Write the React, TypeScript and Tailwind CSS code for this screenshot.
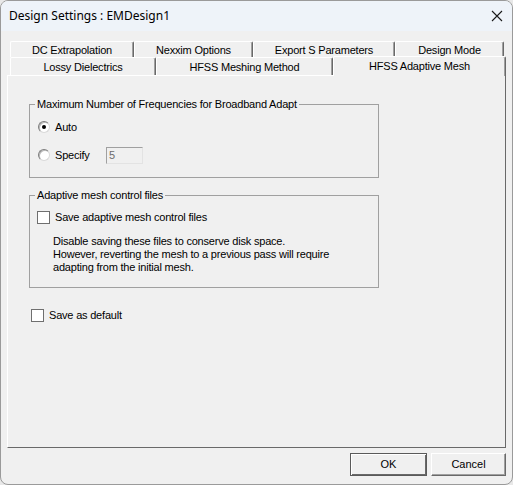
import React from 'react';

const sans = { fontFamily: '"Liberation Sans", Arial, sans-serif' };

function Tab({ label, width, selected = false }: { label: string; width: number; selected?: boolean }) {
    if (selected) {
        return (
            <div
                style={{ width }}
                className="relative z-10 -mb-px flex h-[20px] items-start justify-center rounded-t-[2px] border-l border-t border-r border-l-white border-t-white border-r-[#696969] bg-[#f0f0f0] pt-[3px] shadow-[inset_-1px_0_#a0a0a0] text-[11px] leading-[13px] tracking-[-0.2px] text-black"
            >
                {label}
            </div>
        );
    }
    return (
        <div
            style={{ width }}
            className="flex h-full items-center justify-center rounded-t-[2px] border-l border-t border-r border-l-white border-t-white border-r-[#696969] bg-[#f0f0f0] pt-[2px] shadow-[inset_-1px_0_#a0a0a0] text-[11px] leading-[13px] tracking-[-0.2px] text-black"
        >
            {label}
        </div>
    );
}

function Radio({ checked }: { checked?: boolean }) {
    return (
        <span className="flex h-[12px] w-[12px] items-center justify-center rounded-full border border-t-[#7c7c7c] border-l-[#7c7c7c] border-r-[#d8d8d8] border-b-[#d8d8d8] bg-white shadow-[inset_1px_1px_0_#b8b8b8]">
            {checked && <span className="h-[4px] w-[4px] rounded-full bg-black" />}
        </span>
    );
}

function Check() {
    return <span className="block h-[13px] w-[13px] border border-[#6f6f6f] bg-white" />;
}

export default function App() {
    return (
        <div style={sans} className="h-[485px] w-[513px] bg-[#e8e8e8]">
            <div className="flex h-[485px] w-[513px] flex-col overflow-hidden rounded-[8px] border border-[#9a9a9a] bg-[#f0f0f0]">
                {/* title bar */}
                <div className="flex h-[30px] shrink-0 items-center justify-between bg-[#eef3f9] pl-[8px] pr-[9px]">
                    <span style={{ fontFamily: '"Noto Sans", "Open Sans", sans-serif' }} className="text-[12px] text-black">
                        Design Settings : EMDesign1
                    </span>
                    <svg width="12" height="12" viewBox="0 0 12 12">
                        <path d="M1 1 L11 11 M11 1 L1 11" stroke="#1a1a1a" strokeWidth="1.1" fill="none" />
                    </svg>
                </div>

                <div className="flex flex-1 flex-col px-[6px] pt-[10px]">
                    {/* tabs */}
                    <div className="flex h-[16px] pl-[3px]">
                        <Tab label="DC Extrapolation" width={124} />
                        <Tab label="Nexxim Options" width={119} />
                        <Tab label="Export S Parameters" width={142} />
                        <Tab label="Design Mode" width={109} />
                    </div>
                    <div className="flex h-[18px] items-end pl-[3px]">
                        <Tab label="Lossy Dielectrics" width={146} />
                        <Tab label="HFSS Meshing Method" width={177} />
                        <Tab label="HFSS Adaptive Mesh" width={173} selected />
                    </div>

                    {/* panel */}
                    <div className="flex h-[373px] flex-col border border-l-white border-t-white border-r-[#696969] border-b-[#696969] text-[11px] leading-[13px] tracking-[-0.2px] text-black">
                        <fieldset className="ml-[21px] mt-[22px] w-[350px] border border-[#a0a0a0] pb-[12px]">
                            <legend className="ml-[5px] px-[2px]">Maximum Number of Frequencies for Broadband Adapt</legend>
                            <div className="mt-[6px] flex h-[20px] items-center gap-[5px] pl-[8px]">
                                <Radio checked />
                                <span>Auto</span>
                            </div>
                            <div className="mt-[8px] flex h-[20px] items-center pl-[8px]">
                                <Radio />
                                <span className="ml-[5px] w-[51px]">Specify</span>
                                <span className="flex h-[17px] w-[37px] items-center border border-t-[#a0a0a0] border-l-[#a0a0a0] border-r-[#e3e3e3] border-b-[#e3e3e3] bg-[#f0f0f0] pl-[2px] text-[#6d6d6d]">
                                    5
                                </span>
                            </div>
                        </fieldset>

                        <fieldset className="ml-[21px] mt-[11px] w-[350px] border border-[#a0a0a0] pb-[13px]">
                            <legend className="ml-[5px] px-[2px]">Adaptive mesh control files</legend>
                            <div className="mt-[7px] flex h-[16px] items-center gap-[5px] pl-[7px]">
                                <Check />
                                <span>Save adaptive mesh control files</span>
                            </div>
                            <p className="ml-[23px] mt-[10px]">
                                Disable saving these files to conserve disk space.
                                <br />
                                However, reverting the mesh to a previous pass will require
                                <br />
                                adapting from the initial mesh.
                            </p>
                        </fieldset>

                        <div className="ml-[23px] mt-[19px] flex h-[16px] items-center gap-[5px]">
                            <Check />
                            <span>Save as default</span>
                        </div>
                    </div>

                    {/* buttons */}
                    <div className="mt-[5px] flex justify-end gap-[4px] text-[11px] text-black">
                        <button className="flex h-[23px] w-[77px] items-center justify-center border border-[#5a5a5a] bg-[#f0f0f0] shadow-[inset_1px_1px_0_#fff,inset_-1px_-1px_0_#696969]">
                            OK
                        </button>
                        <button className="flex h-[23px] w-[75px] items-center justify-center border border-l-white border-t-white border-r-[#696969] border-b-[#696969] bg-[#f0f0f0] shadow-[inset_-1px_-1px_0_#a0a0a0]">
                            Cancel
                        </button>
                    </div>
                </div>
            </div>
        </div>
    );
}
